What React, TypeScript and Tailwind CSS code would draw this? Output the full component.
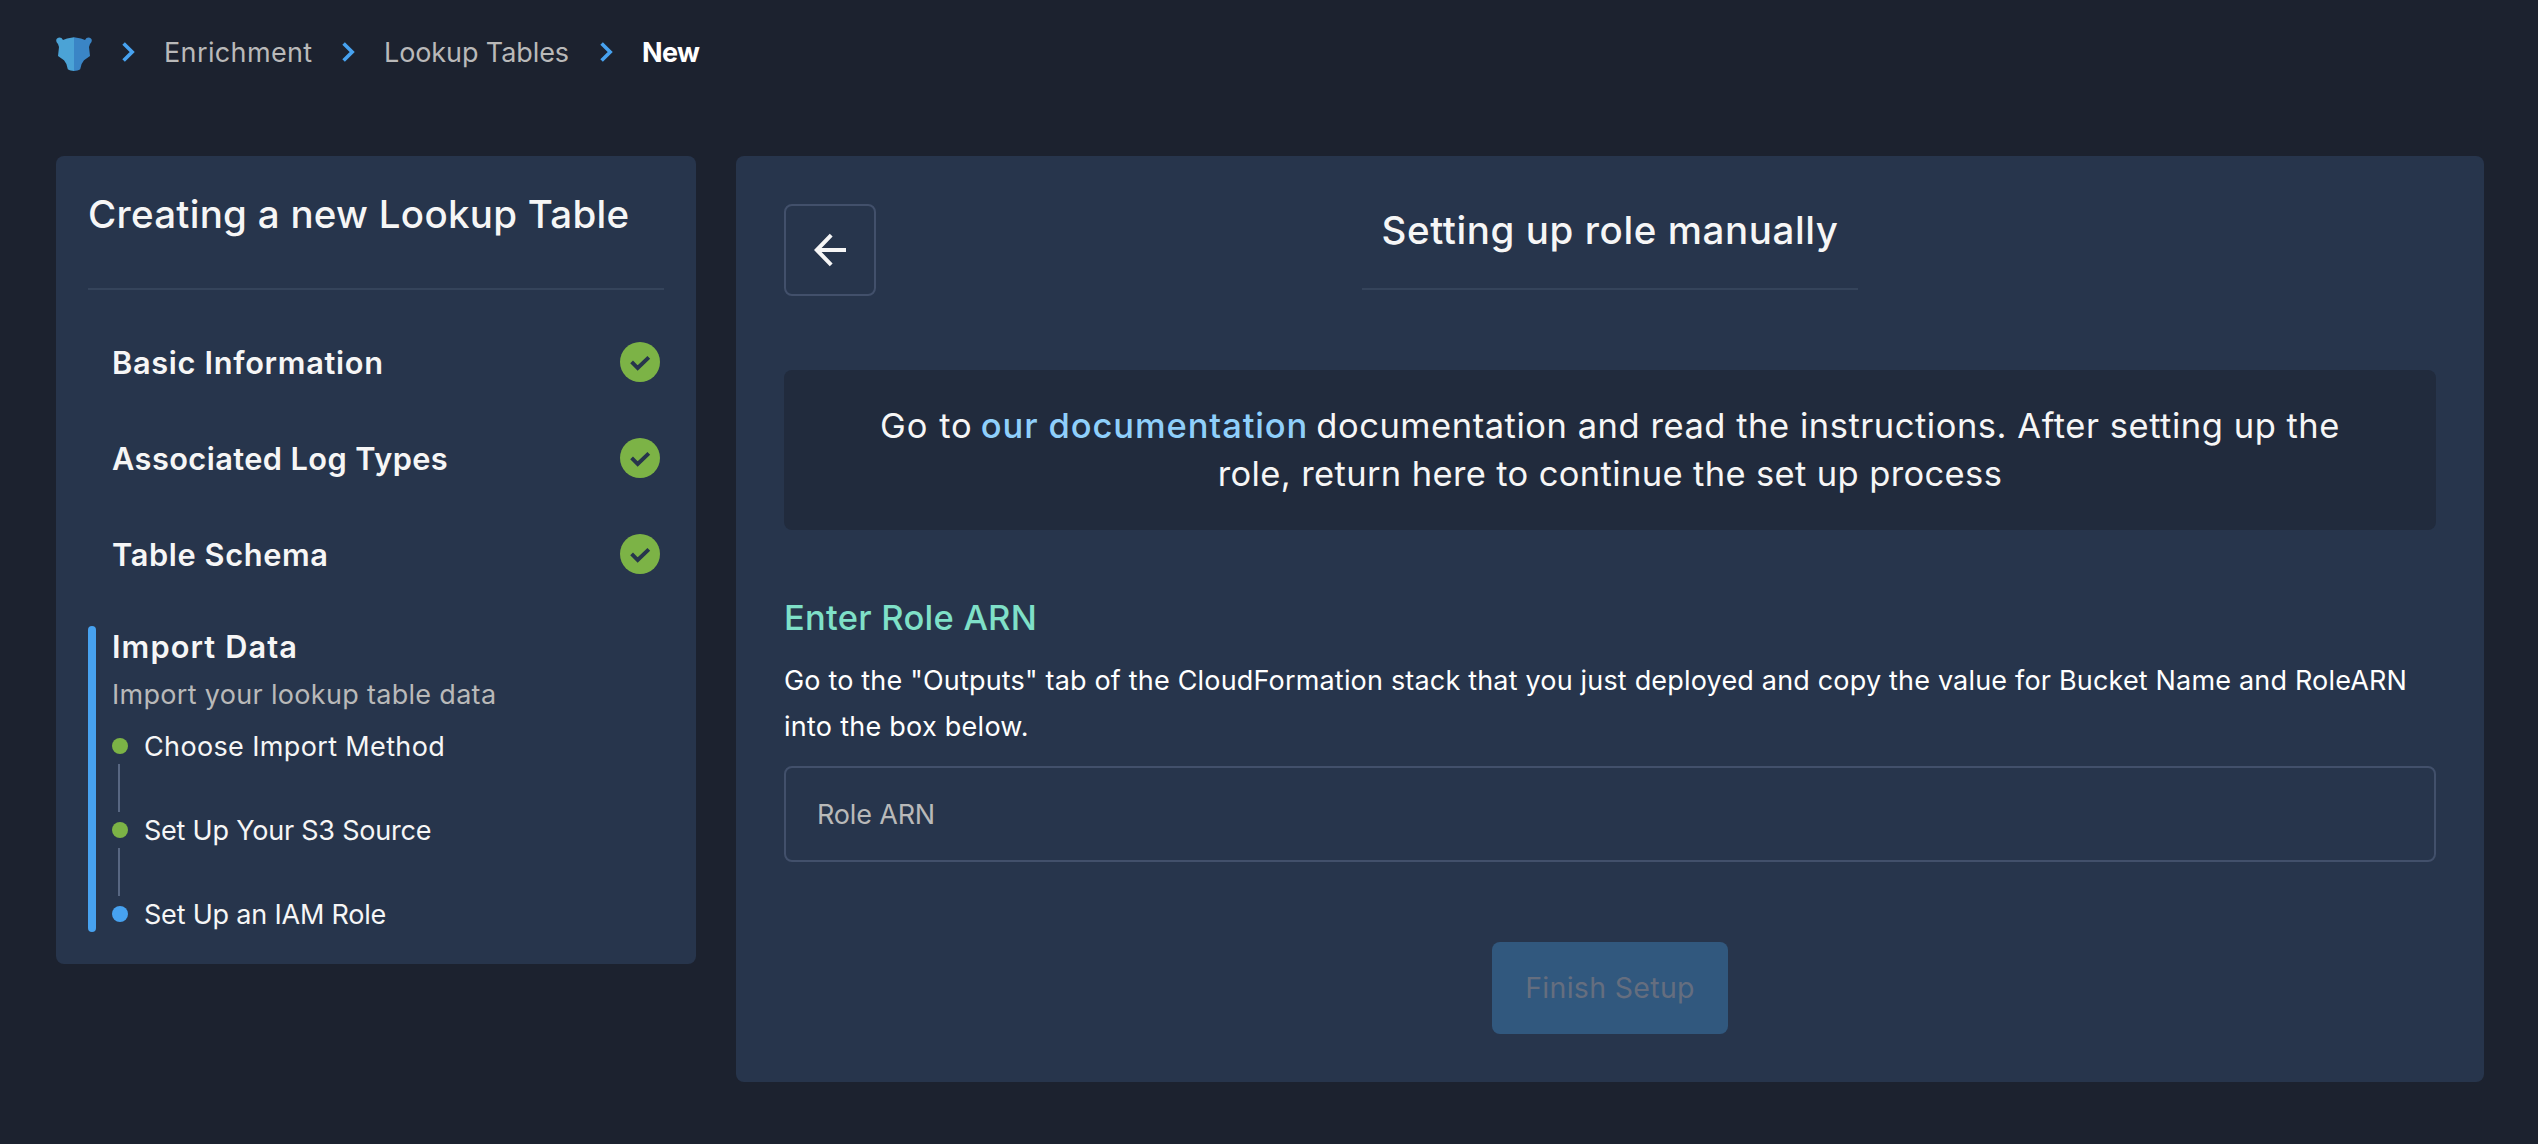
function Logo() {
  return (
    <svg className="h-[34px] w-9 shrink-0" viewBox="0 0 36 34">
      <path
        d="M18 .3 11 1.6 7 3 5.5 1C3.5-.3.6.6.2 3c0 1.8.6 2.8 1.8 4L3 10 2 19l6 4.3L10.4 27l1.4 5.3C13.5 33.4 15.5 34 18 34Z"
        fill="#4ba3d6"
      />
      <path
        d="M18 .3 25 1.6 29 3 30.5 1C32.5-.3 35.4.6 35.8 3c0 1.8-.6 2.8-1.8 4L33 10l1 9-6 4.3L25.6 27l-1.4 5.3C22.5 33.4 20.5 34 18 34Z"
        fill="#3a85c6"
      />
    </svg>
  );
}

function Chevron() {
  return (
    <svg className="h-5 w-[13px] shrink-0" viewBox="0 0 13 20" fill="none">
      <path d="M1.6 1.4 10.2 10 1.6 18.6" stroke="#47a2f0" strokeWidth="3.6" />
    </svg>
  );
}

function CheckBadge() {
  return (
    <svg className="mr-1 size-10 shrink-0" viewBox="0 0 40 40" fill="none">
      <circle cx="20" cy="20" r="20" fill="#7cb346" />
      <path d="m11.6 19.8 6.1 6.2L28.8 15.3" stroke="#27354c" strokeWidth="3.9" />
    </svg>
  );
}

function Breadcrumbs() {
  return (
    <nav className="flex h-[104px] items-center px-14 text-[27px] text-[#b9b9b9]">
      <span className="mt-1">
        <Logo />
      </span>
      <span className="w-[30px]" />
      <Chevron />
      <a className="ml-[29px] w-[178px] whitespace-nowrap pt-0.5 tracking-[0.37px]">Enrichment</a>
      <Chevron />
      <a className="ml-[29px] w-[216px] whitespace-nowrap pt-0.5 tracking-[-0.1px]">Lookup Tables</a>
      <Chevron />
      <span className="ml-[29px] pt-0.5 font-bold tracking-[-0.7px] text-white">New</span>
    </nav>
  );
}

const doneSteps = [
  { label: "Basic Information", tracking: "tracking-[0.68px]" },
  { label: "Associated Log Types", tracking: "tracking-[0.42px]" },
  { label: "Table Schema", tracking: "tracking-[0.62px]" },
];

const subSteps = [
  { label: "Choose Import Method", dot: "bg-[#7cb346]", tracking: "tracking-[0.36px]" },
  { label: "Set Up Your S3 Source", dot: "bg-[#7cb346]", tracking: "tracking-[-0.22px]" },
  { label: "Set Up an IAM Role", dot: "bg-[#47a2f0]", tracking: "tracking-[-0.2px]" },
];

function Sidebar() {
  return (
    <aside className="w-[640px] shrink-0 rounded-lg bg-[#27354c] p-8">
      <h1 className="whitespace-nowrap text-[38.5px] font-medium leading-[52px] tracking-[0.27px]">
        Creating a new Lookup Table
      </h1>
      <div className="mt-12 mb-6 h-0.5 bg-[#35445b]" />
      {doneSteps.map((s) => (
        <div key={s.label} className="flex h-24 items-center justify-between pl-6">
          <span className={`pt-0.5 text-[30.75px] font-semibold ${s.tracking}`}>{s.label}</span>
          <CheckBadge />
        </div>
      ))}
      <div className="mt-6 flex h-[306px] gap-4">
        <div className="w-2 rounded-full bg-[#47a2f0]" />
        <div>
          <h2 className="pt-px text-[30.75px] font-semibold leading-10 tracking-[1.1px]">
            Import Data
          </h2>
          <p className="mt-2.5 mb-[15px] text-[27px] leading-9 tracking-[0.31px] text-[#b9b9b9]">
            Import your lookup table data
          </p>
          {subSteps.map((s, i) => (
            <div key={s.label}>
              {i > 0 && <div className="ml-1.5 h-12 w-0.5 bg-[#586782]" />}
              <div className="flex h-9 items-center gap-4">
                <span className={`size-4 rounded-full ${s.dot}`} />
                <span className={`pt-0.5 text-[27px] leading-9 ${s.tracking}`}>{s.label}</span>
              </div>
            </div>
          ))}
        </div>
      </div>
    </aside>
  );
}

function BackButton() {
  return (
    <button className="size-[92px] rounded-lg border-2 border-[#42506b]">
      <svg className="size-[88px]" viewBox="2 2 88 88" fill="none" stroke="#f6f6f6" strokeWidth="4">
        <path d="M62 46H33M47.2 31.2 32.8 46l14.4 14.8" />
      </svg>
    </button>
  );
}

function RolePanel() {
  return (
    <main className="w-[1748px] shrink-0 rounded-lg bg-[#27354c] p-12">
      <header className="grid h-[92px] grid-cols-[1fr_496px_1fr]">
        <BackButton />
        <div className="text-center">
          <h2 className="whitespace-nowrap text-[38.5px] font-medium leading-[52px] tracking-[0.59px]">
            Setting up role manually
          </h2>
          <div className="mt-8 h-0.5 bg-[#35445b]" />
        </div>
      </header>

      <section className="mt-[74px] flex h-40 flex-col items-center justify-center rounded-lg bg-[#212b3d] text-[34.5px] leading-[48px]">
        <p className="flex gap-2 whitespace-nowrap">
          <span className="tracking-[1px]">Go to</span>
          <a className="font-medium tracking-[0.9px] text-[#8fcffb]">our documentation</a>
          <span className="tracking-[0.54px]">
            documentation and read the instructions. After setting up the
          </span>
        </p>
        <p className="whitespace-nowrap tracking-[0.37px]">
          role, return here to continue the set up process
        </p>
      </section>

      <h3 className="mt-16 text-[34.5px] font-medium leading-[48px] tracking-[0.25px] text-[#7fe0c8]">
        Enter Role ARN
      </h3>
      <p className="mt-4 whitespace-nowrap text-[27px] leading-[46px] text-white">
        <span className="tracking-[0.18px]">
          Go to the "Outputs" tab of the CloudFormation stack that you just deployed and copy the value
          for Bucket Name and RoleARN
        </span>
        <br />
        <span className="tracking-[0.26px]">into the box below.</span>
      </p>
      <div className="mt-4 flex h-24 items-center rounded-lg border-2 border-[#42506b] px-[31px] pt-0.5 text-[27px] tracking-[-0.17px] text-[#b9b9b9]">
        Role ARN
      </div>
      <button
        disabled
        className="mx-auto mt-20 block h-[92px] w-[236px] rounded-lg bg-[#31587e] text-[28.5px] tracking-[0.32px] text-[#656e7f]"
      >
        Finish Setup
      </button>
    </main>
  );
}

export default function App() {
  return (
    <div className="h-[1144px] w-[2538px] overflow-hidden bg-[#1c222f] font-['Inter',sans-serif] text-[#f6f6f6]">
      <Breadcrumbs />
      <div className="mt-[52px] flex items-start gap-10 px-14">
        <Sidebar />
        <RolePanel />
      </div>
    </div>
  );
}
